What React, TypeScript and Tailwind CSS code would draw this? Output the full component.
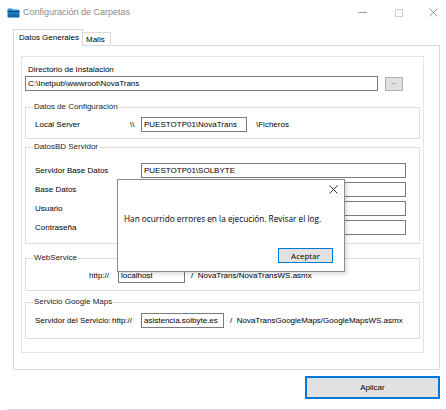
import type { ReactNode } from "react";

function FolderIcon() {
  return (
    <svg width="13" height="10" viewBox="0 0 13 10">
      <defs>
        <linearGradient id="fold" x1="0" y1="0" x2="0" y2="1">
          <stop offset="0" stopColor="#2e9be0" />
          <stop offset="1" stopColor="#0b5fa3" />
        </linearGradient>
      </defs>
      <path d="M0.5 1.5 Q0.5 0.5 1.5 0.5 H5 L6 1.5 H11.5 Q12.5 1.5 12.5 2.5 V8.5 Q12.5 9.5 11.5 9.5 H1.5 Q0.5 9.5 0.5 8.5 Z" fill="url(#fold)" />
      <path d="M0.5 3.5 H12.5" stroke="#0a3f6e" strokeWidth="1" />
    </svg>
  );
}

function TextBox({ value, className }: { value?: string; className: string }) {
  return (
    <div className={`flex h-[15px] items-center border border-[#7a7a7a] bg-white pl-[2px] leading-none ${className}`}>
      {value}
    </div>
  );
}

function Group({ title, className, children }: { title: string; className: string; children: ReactNode }) {
  return (
    <fieldset className={`w-[395px] border border-[#dcdcdc] pl-[9px] ${className}`}>
      <legend className="-ml-[2px] px-[1px] text-[#222] leading-[10px]">{title}</legend>
      {children}
    </fieldset>
  );
}

export default function App() {
  return (
    <div className="relative h-[410px] w-[446px] overflow-hidden bg-white font-['Liberation_Sans',Arial,sans-serif] text-[8px] text-black">
      {/* window caption */}
      <div className="flex h-[25px] items-center pl-[7px] pr-[8px]">
        <FolderIcon />
        <span className="ml-[3px] text-[9px] text-[#8a8a8a]">Configuración de Carpetas</span>
        <div className="ml-auto flex items-center text-[#b5b5b5]">
          <div className="h-px w-[9px] bg-[#9a9a9a]" />
          <div className="ml-[28px] h-[8px] w-[8px] border border-[#d0d0d0]" />
          <svg className="ml-[26px]" width="9" height="9" viewBox="0 0 9 9">
            <path d="M0.5 0.5 L8.5 8.5 M8.5 0.5 L0.5 8.5" stroke="#9a9a9a" strokeWidth="1" />
          </svg>
        </div>
      </div>

      {/* tab strip */}
      <div className="ml-[13px] mt-[4px] flex h-[16px] items-end">
        <div className="relative z-10 -mb-px flex h-[17px] w-[70px] items-center border border-b-0 border-[#d9d9d9] bg-white pl-[5px]">
          Datos Generales
        </div>
        <div className="flex h-[13px] w-[28px] items-center border border-l-0 border-b-0 border-[#d9d9d9] bg-white pl-[3px] pt-[1px]">
          Mails
        </div>
      </div>

      {/* tab page */}
      <div className="h-[325px] w-[427px] ml-[13px] border border-[#d9d9d9] pl-[7px] pt-[10px]">
        <div className="h-[297px] w-[403px] border border-[#e3e3e3] px-[3px] pt-[8px]">
          <div className="h-[10px] pl-[3px] leading-[10px]">Directorio de Instalación</div>
          <div className="mt-px flex items-center">
            <TextBox value="C:\Inetpub\wwwroot\NovaTrans" className="w-[353px]" />
            <div className="ml-[7px] flex h-[14px] w-[18px] items-center justify-center border border-[#adadad] bg-[#e1e1e1] pb-[3px] text-[7px] text-[#444]">
              ...
            </div>
          </div>

          <Group title="Datos de Configuración" className="mt-[11px] h-[37px] pt-[5px]">
            <div className="flex items-center">
              <span className="w-[95px]">Local Server</span>
              <span className="w-[11px]">\\</span>
              <TextBox value="PUESTOTP01\NovaTrans" className="w-[106px]" />
              <span className="ml-[9px]">\Ficheros</span>
            </div>
          </Group>

          <Group title="DatosBD Servidor" className="mt-[3px] h-[102px] pt-[11px]">
            <div className="flex flex-col gap-[4px]">
              {[
                ["Servidor Base Datos", "PUESTOTP01\\SOLBYTE"],
                ["Base Datos", ""],
                ["Usuario", ""],
                ["Contraseña", ""],
              ].map(([label, value]) => (
                <div key={label} className="flex items-center">
                  <span className="w-[106px]">{label}</span>
                  <TextBox value={value} className="w-[265px]" />
                </div>
              ))}
            </div>
          </Group>

          <Group title="WebService" className="mt-[9px] h-[38px] pt-[5px]">
            <div className="flex items-center">
              <span className="ml-[54px] w-[29px]">http://</span>
              <TextBox value="localhost" className="w-[67px]" />
              <span className="ml-[6px]">/&nbsp;&nbsp;NovaTrans/NovaTransWS.asmx</span>
            </div>
          </Group>

          <Group title="Servicio Google Maps" className="mt-[6px] h-[42px] pt-[6px]">
            <div className="flex items-center">
              <span className="w-[77px]">Servidor del Servicio:</span>
              <span className="w-[29px]">http://</span>
              <TextBox value="asistencia.solbyte.es" className="w-[83px]" />
              <span className="ml-[6px]">/&nbsp;&nbsp;NovaTransGoogleMaps/GoogleMapsWS.asmx</span>
            </div>
          </Group>
        </div>
      </div>

      {/* footer */}
      <div className="mt-[6px] flex justify-end pr-[6px]">
        <button className="flex h-[23px] w-[135px] items-center justify-center border-2 border-[#0078d7] bg-[#e1e1e1]">
          Aplicar
        </button>
      </div>
      <div className="absolute bottom-0 left-[7px] right-0 h-px bg-[#d6d6d6]" />

      {/* message box */}
      <div className="absolute left-[117px] top-[179px] flex h-[93px] w-[228px] flex-col border border-[#8c8c8c] bg-white shadow-[2px_2px_4px_rgba(0,0,0,0.15)]">
        <div className="flex justify-end pr-[6px] pt-[5px]">
          <svg width="9" height="9" viewBox="0 0 9 9">
            <path d="M0.5 0.5 L8.5 8.5 M8.5 0.5 L0.5 8.5" stroke="#333" strokeWidth="1" />
          </svg>
        </div>
        <div className="mt-[19px] pl-[6px] font-['Open_Sans',Arial,sans-serif] text-[8.25px]">
          Han ocurrido errores en la ejecución. Revisar el log.
        </div>
        <div className="mt-auto mb-[8px] flex justify-end pr-[11px]">
          <button className="flex h-[15px] w-[55px] items-center justify-center border border-[#0078d7] bg-[#e1e1e1] font-['Open_Sans',Arial,sans-serif] text-[8px]">
            Aceptar
          </button>
        </div>
      </div>
    </div>
  );
}
